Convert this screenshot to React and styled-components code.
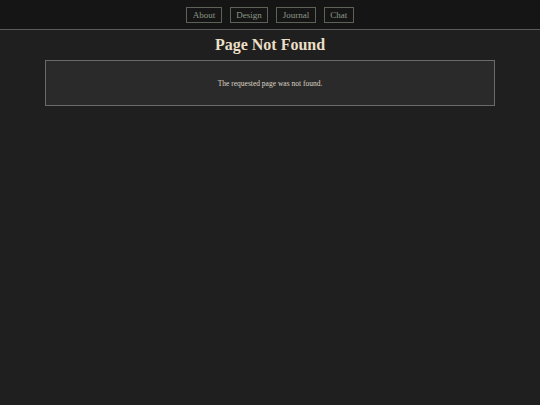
import styled, { createGlobalStyle } from "styled-components";

const Global = createGlobalStyle`
  html, body { margin: 0; padding: 0; background: #1f1f1f; }
  body { font-family: "Liberation Serif", "DejaVu Serif", serif; }
  #root { min-height: 405px; }
`;

const Header = styled.header`
  height: 29px;
  background: #151515;
  border-bottom: 1px solid #5a5a5a;
  display: flex;
  justify-content: center;
  align-items: center;
  gap: 8px;
`;

const NavButton = styled.a`
  display: flex;
  align-items: center;
  height: 14px;
  padding: 0 5.5px;
  border: 1px solid #5c6258;
  color: #8e9986;
  font-size: 9px;
  text-decoration: none;
  cursor: pointer;
`;

const Main = styled.main`
  padding: 6px 45px;
  display: flex;
  flex-direction: column;
  align-items: center;
`;

const Title = styled.h1`
  margin: 0 0 6px;
  font-size: 16px;
  font-weight: bold;
  color: #eadfc6;
`;

const Box = styled.div`
  align-self: stretch;
  height: 44px;
  background: #2a2a2a;
  border: 1px solid #6a6a6a;
  display: flex;
  justify-content: center;
  align-items: center;
  color: #ddd5c5;
  font-size: 7.5px;
`;

const links = ["About", "Design", "Journal", "Chat"];

export default function App() {
  return (
    <>
      <Global />
      <Header>
        {links.map((l) => (
          <NavButton key={l}>{l}</NavButton>
        ))}
      </Header>
      <Main>
        <Title>Page Not Found</Title>
        <Box>The requested page was not found.</Box>
      </Main>
    </>
  );
}
